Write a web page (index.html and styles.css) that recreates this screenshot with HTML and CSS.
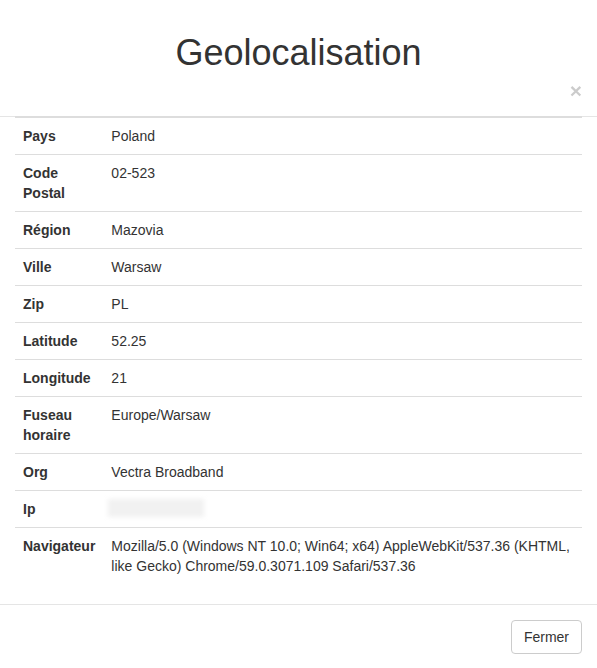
FILE: index.html
```html
<!DOCTYPE html>
<html lang="fr">
<head>
<meta charset="utf-8">
<title>Geolocalisation</title>
<link rel="stylesheet" href="styles.css">
</head>
<body>
<div class="modal">
  <div class="modal-header">
    <h1 class="modal-title">Geolocalisation</h1>
    <button class="close" type="button" aria-label="Close">&times;</button>
  </div>
  <div class="modal-body">
    <table class="info">
      <tbody>
        <tr><th>Pays</th><td>Poland</td></tr>
        <tr><th>Code Postal</th><td>02-523</td></tr>
        <tr><th>Région</th><td>Mazovia</td></tr>
        <tr><th>Ville</th><td>Warsaw</td></tr>
        <tr><th>Zip</th><td>PL</td></tr>
        <tr><th>Latitude</th><td>52.25</td></tr>
        <tr><th>Longitude</th><td>21</td></tr>
        <tr><th>Fuseau horaire</th><td>Europe/Warsaw</td></tr>
        <tr><th>Org</th><td>Vectra Broadband</td></tr>
        <tr><th>Ip</th><td><span class="blurred"></span></td></tr>
        <tr><th>Navigateur</th><td>Mozilla/5.0 (Windows NT 10.0; Win64; x64) AppleWebKit/537.36 (KHTML, like Gecko) Chrome/59.0.3071.109 Safari/537.36</td></tr>
      </tbody>
    </table>
  </div>
  <div class="modal-footer">
    <button class="btn" type="button">Fermer</button>
  </div>
</div>
</body>
</html>
```

FILE: styles.css
```css
* { box-sizing: border-box; }
html, body {
  margin: 0;
  padding: 0;
  background: #fff;
}
body {
  font-family: "Liberation Sans", Arial, Helvetica, sans-serif;
  font-size: 14px;
  line-height: 20px;
  color: #333;
}
.modal {
  width: 597px;
  background: #fff;
}
.modal-header {
  display: flex;
  flex-direction: column;
  padding: 15px 15px 15px;
  border-bottom: 1px solid #e5e5e5;
}
.modal-title {
  margin: 18px 0 0;
  font-size: 36px;
  line-height: 39.6px;
  font-weight: 500;
  text-align: center;
  color: #333;
}
.close {
  align-self: flex-end;
  margin-top: 7px;
  padding: 0;
  border: 0;
  background: transparent;
  font-family: "Liberation Sans", Arial, sans-serif;
  font-size: 21px;
  font-weight: bold;
  line-height: 21px;
  height: 21px;
  color: #000;
  opacity: .2;
  text-shadow: 0 1px 0 #fff;
  cursor: pointer;
}
.modal-body {
  padding: 0 15px 20px;
}
.info {
  width: 100%;
  border-collapse: collapse;
  border-spacing: 0;
  margin-top: -1px;
}
.info th, .info td {
  padding: 8px;
  vertical-align: top;
  text-align: left;
  border-top: 1px solid #ddd;
}
.info tr:first-child th, .info tr:first-child td {
  border-top: 2px solid #ddd;
}
.info th {
  width: 1px;
  font-weight: bold;
}
.blurred {
  display: block;
  width: 96px;
  height: 18px;
  margin: 0 0 2px -3px;
  background: #f1f1f1;
  filter: blur(2px);
}
.modal-footer {
  display: flex;
  justify-content: flex-end;
  padding: 15px;
  border-top: 1px solid #e5e5e5;
}
.btn {
  font-family: "Liberation Sans", Arial, sans-serif;
  font-size: 14px;
  line-height: 20px;
  padding: 6px 12px;
  color: #333;
  background: #fff;
  border: 1px solid #ccc;
  border-radius: 4px;
  cursor: pointer;
}
```
